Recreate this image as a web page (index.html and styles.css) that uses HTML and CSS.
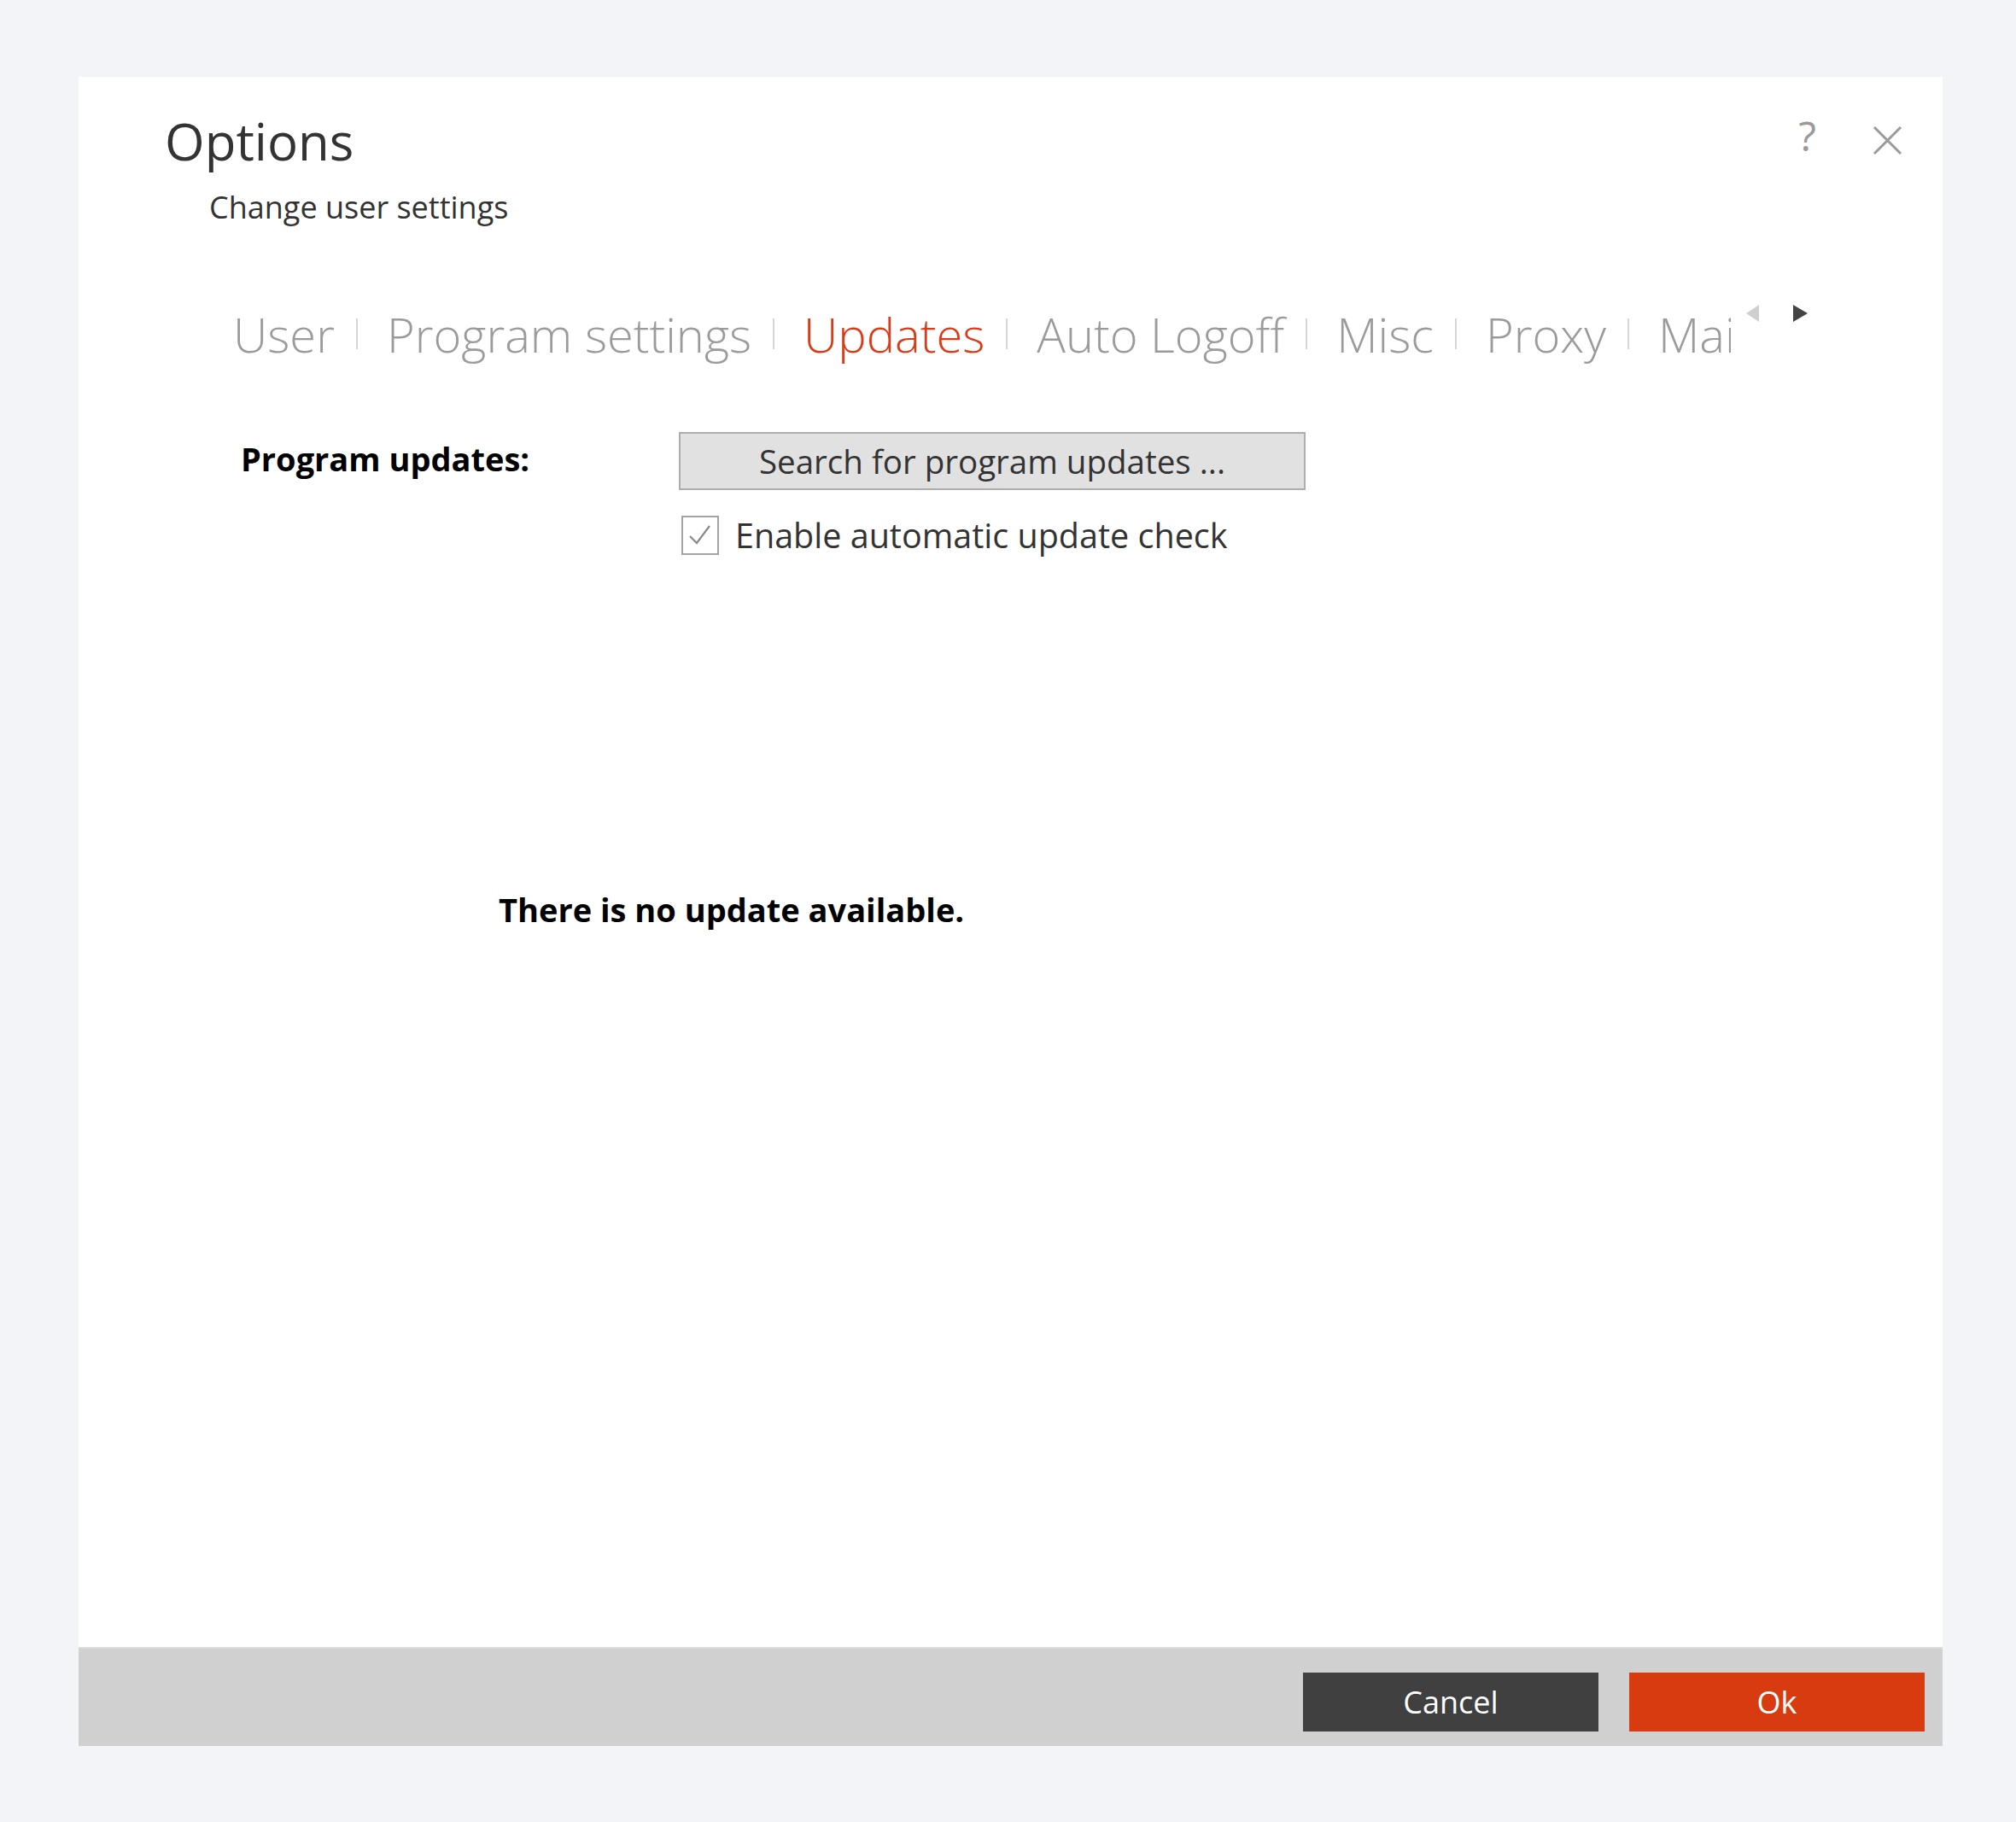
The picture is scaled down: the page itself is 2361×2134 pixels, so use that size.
FILE: index.html
```html
<!DOCTYPE html>
<html lang="en">
<head>
  <meta charset="UTF-8">
  <title>Options</title>
  <link rel="stylesheet" href="styles.css">
</head>
<body>
  <!-- Options dialog -->
  <div class="dialog">
    <header class="dialog-head">
      <div class="titles">
        <h1>Options</h1>
        <p class="subtitle">Change user settings</p>
      </div>
      <div class="head-tools">
        <span class="help">?</span>
        <svg class="close" width="35" height="35" viewBox="0 0 35 35">
          <path d="M2 2 L33 33 M33 2 L2 33" stroke="#9a9a9a" stroke-width="3" fill="none"/>
        </svg>
      </div>
    </header>

    <!-- Tabs -->
    <nav class="tabs">
      <ul class="tab-strip">
        <li><a>User</a></li>
        <li><a>Program settings</a></li>
        <li><a class="active">Updates</a></li>
        <li><a>Auto Logoff</a></li>
        <li><a>Misc</a></li>
        <li><a>Proxy</a></li>
        <li><a>Maintenance</a></li>
      </ul>
      <div class="tab-arrows">
        <span class="arrow-left"></span>
        <span class="arrow-right"></span>
      </div>
    </nav>

    <!-- Updates page -->
    <main class="tab-body">
      <div class="form-row">
        <label class="row-label">Program updates:</label>
        <div class="controls">
          <button class="search-btn">Search for program updates ...</button>
          <label class="check">
            <span class="check-box">
              <svg width="32" height="32" viewBox="0 0 32 32">
                <path d="M4 17 L12 25 L27 5" stroke="#8a8a8a" stroke-width="2.2" fill="none"/>
              </svg>
            </span>
            Enable automatic update check
          </label>
        </div>
      </div>
      <p class="status">There is no update available.</p>
    </main>

    <footer class="dialog-foot">
      <button class="btn btn-cancel">Cancel</button>
      <button class="btn btn-ok">Ok</button>
    </footer>
  </div>
</body>
</html>
```

FILE: styles.css
```css
/* General */
body {
  margin: 0;
  padding: 90px 86px 89px 92px;
  background-color: #f3f4f8;
  font-family: 'Open Sans', 'Noto Sans', sans-serif;
  color: #333;
}

/* Dialog */
.dialog {
  height: 1955px;
  background: #fff;
  display: flex;
  flex-direction: column;
}

.dialog-head {
  display: flex;
  justify-content: space-between;
  padding: 45px 47px 0 101px;
}

h1 {
  margin: 0;
  font-size: 60px;
  font-weight: 400;
  line-height: 60px;
  color: #333;
}

.subtitle {
  margin: 30px 0 0 52px;
  font-size: 36px;
  line-height: 36px;
}

.head-tools {
  display: flex;
  align-items: flex-start;
  gap: 66px;
}

.help {
  font-size: 48px;
  font-weight: 400;
  line-height: 48px;
  color: #9a9a9a;
}

.close {
  margin-top: 12px;
}

/* Tabs */
.tabs {
  display: flex;
  align-items: flex-start;
  margin-top: 90px;
  padding-left: 181px;
}

.tab-strip {
  display: flex;
  width: 1754px;
  margin: 0;
  padding: 0;
  list-style: none;
  overflow: hidden;
  white-space: nowrap;
}

.tab-strip li {
  display: flex;
  align-items: center;
}

.tab-strip li + li::before {
  content: "";
  width: 2px;
  height: 36px;
  background: #d6d6d6;
  margin: 0 34px 0 25px;
}

.tab-strip a {
  font-size: 56px;
  font-weight: 300;
  line-height: 80px;
  color: #9b9b9b;
}

.tab-strip a.active {
  color: #dd3b17;
}

.tab-arrows {
  display: flex;
  gap: 40px;
  margin: 6px 0 0 18px;
}

.arrow-left {
  width: 0;
  height: 0;
  border-top: 10px solid transparent;
  border-bottom: 10px solid transparent;
  border-right: 15px solid #cfcfcf;
}

.arrow-right {
  width: 0;
  height: 0;
  border-top: 10px solid transparent;
  border-bottom: 10px solid transparent;
  border-left: 17px solid #444;
}

/* Updates page */
.tab-body {
  flex: 1;
  padding: 75px 0 0 190px;
}

.form-row {
  display: flex;
}

.row-label {
  width: 513px;
  margin-top: -3px;
  font-size: 38px;
  font-weight: 700;
  line-height: 68px;
  color: #000;
}

.search-btn {
  width: 734px;
  height: 68px;
  padding: 0;
  border: 2px solid #adadad;
  background: #e1e1e1;
  font-family: inherit;
  font-size: 38.5px;
  color: #333;
}

.check {
  display: flex;
  align-items: center;
  gap: 19px;
  margin: 26px 0 0 3px;
  font-size: 39.5px;
  color: #333;
}

.check-box {
  width: 40px;
  height: 42px;
  border: 2px solid #a3a3a3;
  display: flex;
  align-items: center;
  justify-content: center;
}

.status {
  margin: 389px 0 0 302px;
  font-size: 38px;
  font-weight: 700;
  line-height: 1.2;
  color: #000;
}

/* Footer */
.dialog-foot {
  height: 86px;
  display: flex;
  justify-content: flex-end;
  gap: 36px;
  padding: 28px 21px 0 0;
  background: #d0d0d0;
  border-top: 2px solid #dcdcdc;
}

.btn {
  width: 346px;
  height: 69px;
  border: none;
  font-family: inherit;
  font-size: 36px;
  color: #fff;
}

.btn-cancel {
  background: #404040;
}

.btn-ok {
  background: #d83b10;
}
```
